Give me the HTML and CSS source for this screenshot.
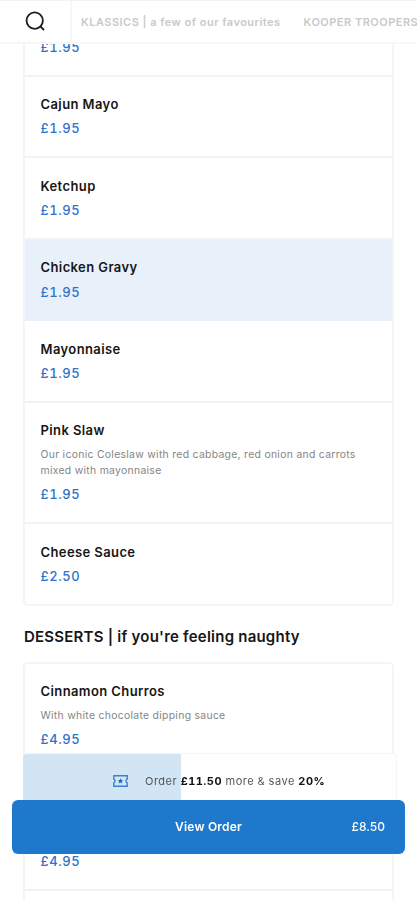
FILE: index.html
```html
<!DOCTYPE html>
<html lang="en">
<head>
<meta charset="utf-8">
<meta name="viewport" content="width=device-width, initial-scale=1">
<title>Menu</title>
<link rel="stylesheet" href="styles.css">
</head>
<body>
<header class="topbar">
  <button class="search" aria-label="Search">
    <svg width="22" height="22" viewBox="0 0 22 22" fill="none" stroke="#1c1c1c" stroke-width="1.8"><circle cx="9.7" cy="9.6" r="8.2"/><path d="M15 15 19 19"/></svg>
  </button>
  <nav class="tabs">
    <span class="tab">KLASSICS | a few of our favourites</span>
    <span class="tab">KOOPER TROOPERS</span>
  </nav>
</header>
<main class="menu">
  <ul class="card sauces">
    <li class="item"><h3></h3><p class="price">£1.95</p></li>
    <li class="item"><h3>Cajun Mayo</h3><p class="price">£1.95</p></li>
    <li class="item"><h3>Ketchup</h3><p class="price">£1.95</p></li>
    <li class="item selected"><h3>Chicken Gravy</h3><p class="price">£1.95</p></li>
    <li class="item"><h3>Mayonnaise</h3><p class="price">£1.95</p></li>
    <li class="item two-line"><h3>Pink Slaw</h3><p class="desc">Our iconic Coleslaw with red cabbage, red onion and carrots<br>mixed with mayonnaise</p><p class="price">£1.95</p></li>
    <li class="item"><h3>Cheese Sauce</h3><p class="price">£2.50</p></li>
  </ul>
  <h2 class="heading">DESSERTS | if you're feeling naughty</h2>
  <ul class="card desserts">
    <li class="item one-line"><h3>Cinnamon Churros</h3><p class="desc">With white chocolate dipping sauce</p><p class="price">£4.95</p></li>
    <li class="item two-line"><h3></h3><p class="desc"><br><br></p><p class="price">£4.95</p></li>
    <li class="item stub"></li>
  </ul>
</main>
<footer class="basket">
  <div class="offer">
    <svg class="ticket" width="15" height="12" viewBox="0 0 15 12" fill="none" stroke="#3a80d0" stroke-width="1.4"><path d="M.8.8H14.2V4.2A1.9 1.9 0 0 0 14.2 7.8V11.2H.8V7.8A1.9 1.9 0 0 0 .8 4.2Z"/><path d="M7.5 3.3 8.3 5.1 10.2 5.2 8.8 6.5 9.3 8.4 7.5 7.4 5.7 8.4 6.2 6.5 4.8 5.2 6.7 5.1Z" fill="#2169bd" stroke="none"/></svg>
    <span class="offer-text">Order <b>£11.50</b> more &amp; save <b>20%</b></span>
  </div>
  <button class="view-order"><span class="view-label">View Order</span><span class="total">£8.50</span></button>
</footer>
</body>
</html>
```
FILE: styles.css
```css
* { box-sizing: border-box; }
body {
  margin: 0;
  height: 900px;
  overflow: hidden;
  background: #fff;
  color: #161616;
  font-family: Inter, "Liberation Sans", sans-serif;
}
h2, h3, p, ul { margin: 0; padding: 0; }
ul { list-style: none; }
button { border: 0; padding: 0; background: none; font: inherit; }

.topbar {
  position: relative;
  z-index: 1;
  display: flex;
  height: 44px;
  background: #fff;
  border-top: 1px solid #f3f3f3;
  border-bottom: 2px solid #f7f7f7;
}
.search {
  flex: none;
  display: flex;
  align-items: flex-start;
  width: 72px;
  padding: 10px 0 0 25px;
  border-right: 2px solid #f7f7f7;
}
.search svg { display: block; }
.tabs {
  display: flex;
  gap: 23px;
  padding-left: 9px;
  overflow: hidden;
  white-space: nowrap;
}
.tab {
  flex: none;
  color: #c9c9c9;
  font-size: 11px;
  font-weight: 600;
  line-height: 42px;
  letter-spacing: 0.48px;
}

.menu { height: 856px; margin-left: 23px; width: 371px; overflow: hidden; }
.card { border: 2px solid #f5f5f5; border-radius: 5px; overflow: hidden; }
.sauces { height: 611px; margin-top: -49px; }
.item {
  height: 81.6px;
  padding: 17.4px 15px 0 15.5px;
  border-bottom: 2px solid #f3f3f3;
}
.sauces .item:first-child { height: 79.6px; padding-top: 15.5px; }
.item:last-child { border-bottom: 0; }
.item.two-line { height: 121.3px; }
.item.one-line { height: 105.7px; }
.item.stub { height: 12px; padding: 0; }
.selected { background: #e8f0fa; border-bottom-color: #e8f0fa; }
.item h3 { height: 20px; font-size: 13px; font-weight: 600; line-height: 20px; letter-spacing: 0.4px; }
.desc {
  margin: 6.6px 0 1.5px;
  color: #858585;
  font-size: 10.4px;
  line-height: 16.4px;
  letter-spacing: 0.3px;
  white-space: nowrap;
}
.one-line .desc { margin-bottom: 3.6px; }
.price {
  margin-top: 4.5px;
  color: #2f72cc;
  font-size: 13px;
  font-weight: 500;
  line-height: 20px;
  letter-spacing: 0.6px;
  font-variant-numeric: tabular-nums;
}
.heading {
  margin: 20px 0 15px 1px;
  font-size: 15px;
  font-weight: 600;
  line-height: 21px;
  letter-spacing: 0.22px;
  white-space: nowrap;
}

.basket { position: fixed; z-index: 2; top: 753px; left: 12px; width: 393px; }
.offer {
  display: flex;
  align-items: center;
  height: 55px;
  margin: 0 8px 0 11px;
  padding: 0 0 0 90px;
  background: linear-gradient(to right, #d2e5f4 158px, #fff 158px);
  border: 1px solid #f5f5f5;
  border-left: 0;
  border-radius: 4px 4px 0 0;
}
.ticket { flex: none; }
.offer-text { margin-left: 17px; color: #555; font-size: 11px; white-space: nowrap; letter-spacing: 0.5px; font-variant-numeric: tabular-nums; }
.offer-text b { color: #111; font-weight: 700; }
.view-order {
  position: relative;
  display: flex;
  align-items: center;
  justify-content: center;
  width: 393px;
  height: 54px;
  margin-top: -8.5px;
  border-radius: 6px;
  background: #1e79cc;
  color: #fff;
  font-size: 12px;
  line-height: 20px;
}
.view-label { font-weight: 600; letter-spacing: 0.2px; }
.total { position: absolute; right: 20px; font-weight: 500; }
```
